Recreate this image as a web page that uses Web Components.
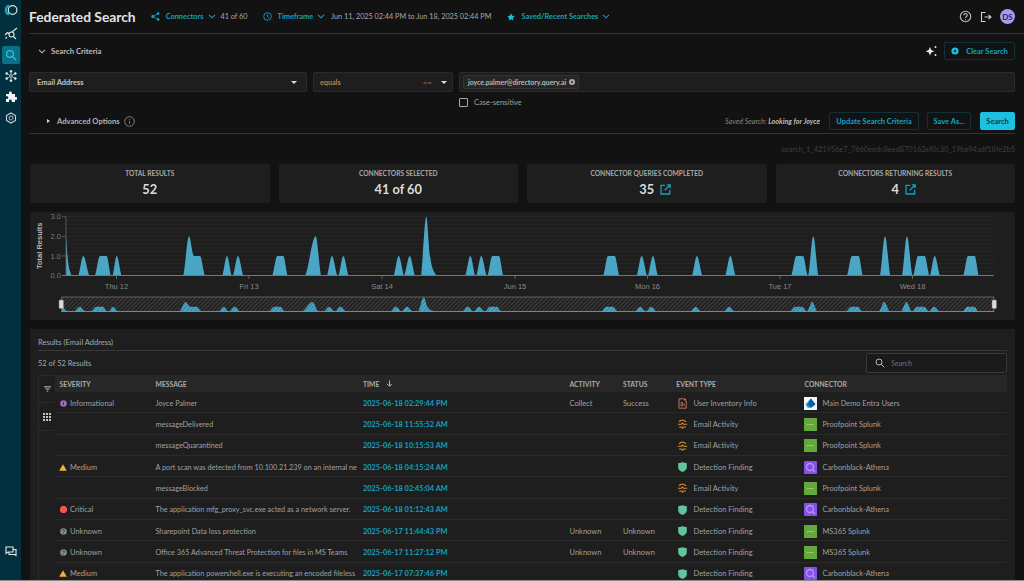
<!DOCTYPE html>
<html>
<head>
<meta charset="utf-8">
<title>Federated Search</title>
<style>
  html, body { margin: 0; height: 581px; overflow: hidden; background: #121212; }
  body { display: flex; font-family: Lato, "Open Sans", sans-serif; color: #c4c4c4; }
  body::after { content: ""; position: fixed; left: 0; right: 0; bottom: 0; height: 1px; background: #8a8a8a; }
  fs-main { flex: 1; min-width: 0; }
</style>
</head>
<body>
<fs-sidebar></fs-sidebar>
<fs-main>
  <fs-header></fs-header>
  <fs-criteria></fs-criteria>
  <fs-stats>
    <fs-stat label="TOTAL RESULTS" value="52"></fs-stat>
    <fs-stat label="CONNECTORS SELECTED" value="41 of 60"></fs-stat>
    <fs-stat label="CONNECTOR QUERIES COMPLETED" value="35" link></fs-stat>
    <fs-stat label="CONNECTORS RETURNING RESULTS" value="4" link></fs-stat>
  </fs-stats>
  <fs-chart></fs-chart>
  <fs-results></fs-results>
</fs-main>

<script>
const TEAL = '#12a0be';

class FsSidebar extends HTMLElement {
  constructor() {
    super();
    this.attachShadow({mode: 'open'}).innerHTML = `
      <style>
        :host { display: flex; flex-direction: column; align-items: center; width: 21px; height: 581px; background: #03303e; flex: none; }
        svg { display: block; }
        .i { width: 18px; height: 18px; margin-top: 3.3px; display: flex; align-items: center; justify-content: center; border-radius: 2px; }
        .logo { margin-top: 1px; height: 18px; }
        .active { background: #0b6f86; }
        .spacer { flex: 1; }
        .bottom { margin-bottom: 21px; }
      </style>
      <div class="i logo"><svg width="14" height="12" viewBox="0 0 14 12" fill="none"><path d="M5 1.500A4.800 4.800 0 0 0 5 10.500" stroke="#1aa6c4" stroke-width="2.200"/><circle cx="8.600" cy="6" r="4.300" stroke="#d8e4e8" stroke-width="1.200"/></svg></div>
      <div class="i" style="margin-top:5px"><svg width="14" height="13" viewBox="0 0 14 13" fill="none" stroke="#dfe6e9" stroke-width="1.100"><path d="M1 8l2.500-2.500 2 1.500M8 5l5-4"/><circle cx="7.500" cy="7.500" r="2.500"/><path d="M9.500 9.500l2.500 2.500M1.500 11.500L3 10"/></svg></div>
      <div class="i active" style="margin-top:4px"><svg width="12" height="12" viewBox="0 0 12 12" fill="none" stroke="#2bc4e0" stroke-width="1.200"><circle cx="5" cy="5" r="3.400"/><path d="M7.600 7.600L11 11"/></svg></div>
      <div class="i"><svg width="12" height="12" viewBox="0 0 12 12" fill="#dfe6e9" stroke="#dfe6e9" stroke-width=".7"><path d="M6 1v10M1.700 3.500l8.600 5M10.300 3.500l-8.600 5" fill="none"/><circle cx="6" cy="1.300" r="1"/><circle cx="6" cy="10.700" r="1"/><circle cx="1.700" cy="3.500" r="1"/><circle cx="10.300" cy="3.500" r="1"/><circle cx="1.700" cy="8.500" r="1"/><circle cx="10.300" cy="8.500" r="1"/><circle cx="6" cy="6" r="1.200" fill="#03303e"/></svg></div>
      <div class="i" style="margin-top:3px"><svg width="12" height="12" viewBox="0 0 12 12" fill="#f1f4f5"><path d="M1 3h3V2a1.400 1.400 0 0 1 2.800 0v1H10v3h1a1.400 1.400 0 0 1 0 2.800h-1V11H6.800V10A1.400 1.400 0 0 0 4 10v1H1V8h1a1.400 1.400 0 0 0 0-2.800H1z"/></svg></div>
      <div class="i" style="margin-top:3px"><svg width="12" height="12" viewBox="0 0 12 12" fill="none" stroke="#c8d2d6" stroke-width="1.100"><path d="M6 1l4.500 2.500v5L6 11 1.500 8.500v-5z"/><circle cx="6" cy="6" r="1.900" stroke-dasharray="1.200 .5"/></svg></div>
      <div class="spacer"></div>
      <div class="i bottom"><svg width="12" height="11" viewBox="0 0 12 11" fill="none" stroke="#e4eaec" stroke-width="1.100"><path d="M1 1h7v5H3L1 7.500zM8 3.500h3V9.500L9.500 8.500H4V6"/></svg></div>`;
  }
}
customElements.define('fs-sidebar', FsSidebar);

const chev = c => `<svg width="8" height="5" viewBox="0 0 8 5" fill="none" stroke="${c}" stroke-width="1.100"><path d="M1 .8l3 3 3-3"/></svg>`;

class FsHeader extends HTMLElement {
  constructor() {
    super();
    this.attachShadow({mode: 'open'}).innerHTML = `
      <style>
        :host { display: flex; align-items: center; height: 33px; margin-left: 8px; padding-right: 9px; border-bottom: 1px solid #333; font-size: 7.250px; color: #a8a8a8; }
        h1 { margin: 0 15px 0 0; font-size: 13.800px; font-weight: 700; color: #e4e4e4; white-space: nowrap; }
        .t { color: ${TEAL}; font-size: 7.400px; font-weight: 700; margin: 0 4px 0 6px; white-space: nowrap; }
        .g { display: flex; align-items: center; white-space: nowrap; }
        svg { display: block; flex: none; }
        .r { margin-left: auto; display: flex; align-items: center; gap: 8px; }
        .av { width: 15px; height: 15px; border-radius: 50%; background: #a79bf0; color: #2a2650; font-size: 8px; font-weight: 700; display: flex; align-items: center; justify-content: center; }
      </style>
      <h1>Federated Search</h1>
      <div class="g"><svg width="9" height="9" viewBox="0 0 9 9" fill="${TEAL}" stroke="${TEAL}" stroke-width=".9"><path d="M2 4.500L7 1.500M2 4.500l5 3" fill="none"/><circle cx="1.800" cy="4.500" r="1.200"/><circle cx="7.200" cy="1.500" r="1"/><circle cx="7.200" cy="7.500" r="1"/></svg><span class="t">Connectors</span>${chev(TEAL)}<span style="margin-left:5px">41 of 60</span></div>
      <div class="g" style="margin-left:15px"><svg width="9" height="9" viewBox="0 0 9 9" fill="none" stroke="${TEAL}" stroke-width=".9"><circle cx="4.500" cy="4.500" r="3.800"/><path d="M4.500 2.300v2.400l1.500.9"/></svg><span class="t">Timeframe</span>${chev(TEAL)}<span style="margin-left:6px">Jun 11, 2025 02:44 PM to Jun 18, 2025 02:44 PM</span></div>
      <div class="g" style="margin-left:16px"><svg width="8" height="8" viewBox="0 0 8 8" fill="#1cc0e0"><path d="M4 .3l1.100 2.500 2.700.3-2 1.800.6 2.700L4 6.200 1.600 7.600l.6-2.700-2-1.800 2.700-.3z"/></svg><span class="t">Saved/Recent Searches</span>${chev(TEAL)}</div>
      <div class="r">
        <svg width="13" height="13" viewBox="0 0 13 13" fill="none" stroke="#bdbdbd" stroke-width="1.100"><circle cx="6.500" cy="6.500" r="5.200"/><path d="M4.800 5.200a1.700 1.700 0 1 1 2.600 1.400c-.6.400-.9.700-.9 1.300"/><path d="M6.500 9.200v.9"/></svg>
        <svg width="12" height="12" viewBox="0 0 12 12" fill="none" stroke="#cfcfcf" stroke-width="1.100"><path d="M5.500 1.500H1.500v9h4M4.500 6H11M8.500 3.800L11 6 8.500 8.200"/></svg>
        <div class="av">DS</div>
      </div>`;
  }
}
customElements.define('fs-header', FsHeader);

class FsSelect extends HTMLElement {
  constructor() {
    super();
    this.attachShadow({mode: 'open'}).innerHTML = `
      <style>
        :host { display: flex; align-items: center; height: 20px; box-sizing: border-box; background: #1e1e1e; border: 1px solid #2b2b2b; border-radius: 2px; font-size: 7.500px; padding: 0 8px 0 7px; gap: 4px; }
        .s { flex: 1; min-width: 0; display: flex; align-items: center; justify-content: space-between; }
        i { width: 0; height: 0; border: 3px solid transparent; border-top: 3.500px solid #ddd; border-bottom: 0; }
      </style>
      <div class="s"><slot></slot></div><i></i>`;
  }
}
customElements.define('fs-select', FsSelect);

class FsButton extends HTMLElement {
  constructor() {
    super();
    this.attachShadow({mode: 'open'}).innerHTML = `
      <style>
        :host { display: inline-flex; align-items: center; justify-content: center; gap: 7px; height: 17.500px; box-sizing: border-box; padding: 0 6px; border: 1px solid #10313a; border-radius: 2px; font-size: 7.500px; font-weight: 700; color: #12a5c4; white-space: nowrap; }
        :host([primary]) { background: #1cc0e0; border-color: #1cc0e0; color: #0d3a46; }
      </style>
      <slot></slot>`;
  }
}
customElements.define('fs-button', FsButton);

class FsCriteria extends HTMLElement {
  constructor() {
    super();
    this.attachShadow({mode: 'open'}).innerHTML = `
      <style>
        :host { display: block; margin-left: 8px; padding-right: 9px; font-size: 7.500px; }
        .top { display: flex; align-items: center; height: 34px; padding: 0 0 0 9px; }
        .top b { font-weight: 700; color: #bdbdbd; margin-left: 5px; font-size: 7.700px; }
        .tools { margin-left: auto; display: flex; align-items: center; gap: 6px; }
        .fields { display: grid; grid-template-columns: 278px 140px 1fr; gap: 6px; margin-top: 4px; }
        .email { font-weight: 700; color: #c4c4c4; }
        .eq { color: #c07e50; font-weight: 700; font-size: 7.200px; margin-left: -1px; }
        .eqs { color: #9a6440; font-weight: 700; margin-right: 5px; font-size: 8px; }
        .value { display: flex; align-items: center; height: 20px; box-sizing: border-box; background: #1e1e1e; border: 1px solid #2b2b2b; border-radius: 2px; padding-left: 3px; }
        .chip { display: flex; align-items: center; gap: 3px; height: 12px; padding: 0 3px 0 4px; border: 1px solid #333; border-radius: 2px; background: #262626; font-size: 6.900px; font-weight: 700; color: #b8b8b8; }
        .case { display: flex; align-items: center; gap: 6px; margin: 5px 0 0 430px; height: 10px; color: #a0a0a0; font-size: 7.500px; }
        .case i { width: 7px; height: 7px; border: 1px solid #aaa; border-radius: 1px; }
        .adv { display: flex; align-items: center; height: 24px; padding: 2px 0 0 18px; border-bottom: 1px solid #333; }
        .adv b { font-weight: 700; color: #b4b4b4; margin-left: 7px; font-size: 7.600px; }
        .adv .saved { margin-left: auto; font-style: italic; color: #868686; font-size: 7.200px; margin-right: 9px; white-space: nowrap; }
        .saved em { font-weight: 700; color: #bdbdbd; }
        .tri { width: 0; height: 0; border: 2.500px solid transparent; border-left: 3px solid #ddd; border-right: 0; }
        .id { height: 30px; display: flex; align-items: center; justify-content: flex-end; font-size: 7.400px; color: #3e3e3e; }
        svg { display: block; }
      </style>
      <div class="top">
        ${chev('#bdbdbd')}<b>Search Criteria</b>
        <div class="tools">
          <svg width="13" height="12" viewBox="0 0 13 12" fill="#e8e8e8"><path d="M5 2l1.300 3 3 1.200-3 1.200L5 10.500 3.700 7.400.7 6.200l3-1.200z"/><circle cx="10.500" cy="2" r="1"/><circle cx="10.500" cy="10" r="1"/></svg>
          <fs-button style="width:71px"><svg width="8" height="8" viewBox="0 0 8 8"><circle cx="4" cy="4" r="3.600" fill="#1cc0e0"/><circle cx="4" cy="4" r="1.300" fill="#12323c"/></svg>Clear Search</fs-button>
        </div>
      </div>
      <div class="fields">
        <fs-select style="padding-right:9px"><span class="email">Email Address</span></fs-select>
        <fs-select style="padding-right:5px"><span class="eq">equals</span><span class="eqs">==</span></fs-select>
        <div class="value"><span class="chip">joyce.palmer@directory.query.ai <svg width="6" height="6" viewBox="0 0 6 6"><circle cx="3" cy="3" r="3" fill="#aaa"/><path d="M2 2l2 2M4 2L2 4" stroke="#222" stroke-width=".7"/></svg></span></div>
      </div>
      <div class="case"><i></i>Case-sensitive</div>
      <div class="adv">
        <span class="tri"></span><b>Advanced Options</b>
        <svg style="margin-left:4px" width="11" height="11" viewBox="0 0 11 11" fill="none" stroke="#9a9a9a" stroke-width=".8"><circle cx="5.500" cy="5.500" r="4.800"/><path d="M5.500 4.800v3M5.500 3v.8"/></svg>
        <span class="saved">Saved Search: <em>Looking for Joyce</em></span>
        <fs-button style="width:90px;margin-right:8px">Update Search Criteria</fs-button>
        <fs-button style="width:44px;margin-right:9px">Save As...</fs-button>
        <fs-button primary style="width:35px">Search</fs-button>
      </div>
      <div class="id">search_1_421956e7_7660eedc8eed870162ef0c30_19be94adf18fe2b5</div>`;
  }
}
customElements.define('fs-criteria', FsCriteria);

class FsStats extends HTMLElement {
  constructor() {
    super();
    this.attachShadow({mode: 'open'}).innerHTML = `
      <style>:host { display: grid; grid-template-columns: repeat(4, 1fr); gap: 9px; margin: 0 9px 0 9px; }</style>
      <slot></slot>`;
  }
}
customElements.define('fs-stats', FsStats);

class FsStat extends HTMLElement {
  constructor() {
    super();
    const linked = this.hasAttribute('link');
    const link = linked ? `<svg width="11" height="11" viewBox="0 0 11 11" fill="none" stroke="${TEAL}" stroke-width="1.300"><path d="M5 1.300H1v8.700h8.700V6M4.700 6.300L10 1M6.800 .8H10.200V4.200"/></svg>` : '';
    this.attachShadow({mode: 'open'}).innerHTML = `
      <style>
        :host { display: flex; flex-direction: column; align-items: center; height: 39px; background: #1e1e1e; border-radius: 2px; box-sizing: border-box; padding-top: 4px; }
        .l { font-size: 6.650px; font-weight: 700; color: #a8a8a8; line-height: 10px; white-space: nowrap; }
        .v { display: flex; align-items: center; gap: 6px; margin-top: 2px; font-size: 12.800px; font-weight: 700; color: #dcdcdc; line-height: 18px; }
        .v.linked { padding-left: 17px; }
      </style>
      <div class="l">${this.getAttribute('label')}</div>
      <div class="v${linked ? ' linked' : ''}">${this.getAttribute('value')}${link}</div>`;
  }
}
customElements.define('fs-stat', FsStat);

// chart series: [x, value] points in page-x, one sub-array per peak
const PEAKS = [
  [[66,2],[67.500,1],[69,.4],[71.700,0]],
  [[78.300,0],[83.300,1],[89.300,0]],
  [[95,0],[100,1],[106.700,1],[110.700,0]],
  [[112.700,0],[116.700,1],[121.700,0]],
  [[183.300,0],[189,2],[194,1],[200,1],[205,0]],
  [[222.300,0],[227,1],[231.700,0]],
  [[233,0],[238,1],[243.300,0]],
  [[272.300,0],[277.300,1],[283.300,1],[287.700,0]],
  [[305.300,0],[315.700,2],[321,0]],
  [[327,0],[332,1],[337.300,0]],
  [[338.700,0],[343.300,1],[348.700,0]],
  [[393.700,0],[398.700,1],[404,0]],
  [[404.300,0],[409.700,1],[415,0]],
  [[421,0],[426.300,3],[430,1],[433,.3],[436.700,0]],
  [[465.300,0],[470.300,1],[475.300,0]],
  [[476.300,0],[481.300,1],[486.700,0]],
  [[487.700,0],[492.300,1],[499,1],[503.300,0]],
  [[603.300,0],[608,1],[614.700,1],[619.300,0]],
  [[636.700,0],[641.700,1],[647,0]],
  [[648,0],[653,1],[658,0]],
  [[692,0],[697,1],[702.300,0]],
  [[725.300,0],[730.300,1],[735.700,0]],
  [[791.300,0],[796.300,1],[803,1],[807.700,0]],
  [[808.300,0],[813.300,2],[818.300,0]],
  [[847,0],[852,1],[858.700,1],[862.700,0]],
  [[880,0],[885,2],[890.300,0]],
  [[902,0],[907,2],[912.300,0]],
  [[913.300,0],[918,1],[924.700,1],[929.300,0]],
  [[930,0],[934.700,1],[940,0]],
  [[963.300,0],[968,1],[974.700,1],[978.700,0]]
];

// monotone curve through a peak, closed on the baseline
function peakPath(pts, fx, fy, base) {
  const p = pts.map(([x, v]) => [fx(x), fy(v)]);
  const s = [];
  for (let i = 0; i < p.length - 1; i++) s.push((p[i + 1][1] - p[i][1]) / (p[i + 1][0] - p[i][0]));
  const m = p.map((_, i) => {
    if (i === 0 || i === p.length - 1) return i === 0 ? s[0] * .6 : s[s.length - 1] * .6;
    return s[i - 1] * s[i] <= 0 ? 0 : 2 * s[i - 1] * s[i] / (s[i - 1] + s[i]);
  });
  let d = `M${p[0][0].toFixed(1)} ${base}L${p[0][0].toFixed(1)} ${p[0][1].toFixed(1)}`;
  for (let i = 0; i < p.length - 1; i++) {
    const dx = (p[i + 1][0] - p[i][0]) / 3;
    d += `C${(p[i][0] + dx).toFixed(1)} ${(p[i][1] + m[i] * dx).toFixed(1)} ${(p[i + 1][0] - dx).toFixed(1)} ${(p[i + 1][1] - m[i + 1] * dx).toFixed(1)} ${p[i + 1][0].toFixed(1)} ${p[i + 1][1].toFixed(1)}`;
  }
  return d + `L${p[p.length - 1][0].toFixed(1)} ${base}Z`;
}

class FsChart extends HTMLElement {
  constructor() {
    super();
    // svg origin is page (30,212)
    const X = x => (x - 30);
    const main = PEAKS.map(p => `<path d="${peakPath(p, X, v => 63.5 - v * 19.6, 63.5)}"/>`).join('');
    const nav = PEAKS.map(p => `<path d="${peakPath(p, x => x * 1.004 - 34.3, v => 99.5 - v * 4.8, 99.5)}"/>`).join('');
    let grid = '';
    for (let i = 0; i < 15; i++) {
      grid += `<path d="M36 ${(4.5 + i * 3.92).toFixed(1)}H964" stroke="#2a2a2a" stroke-width=".7"/>`;
    }
    const yLabels = ['3.0', '2.0', '1.0', '0.0'].map((t, i) => {
      const y = 4.7 + i * 19.6;
      return `<text x="31" y="${y + 2.7}" text-anchor="end" font-size="7.5" fill="#7a7a7a">${t}</text><path d="M32 ${y}H36" stroke="#666" stroke-width=".8"/>`;
    }).join('');
    const days = [['Thu 12', 116.5], ['Fri 13', 249], ['Sat 14', 382], ['Jun 15', 515], ['Mon 16', 647.5], ['Tue 17', 780], ['Wed 18', 912.5]];
    const xLabels = days.map(([t, x]) => `<path d="M${X(x)} 63.5v3.500" stroke="#777" stroke-width=".8"/><text x="${X(x)}" y="77" text-anchor="middle" font-size="7.5" fill="#8a8a8a">${t}</text>`).join('');
    this.attachShadow({mode: 'open'}).innerHTML = `
      <style>
        :host { display: block; height: 108px; margin: 9px 9px 0 9px; background: #1e1e1e; border-radius: 2px; }
        svg { display: block; font-family: "Liberation Sans", Arial, sans-serif; }
      </style>
      <svg width="985" height="108" viewBox="0 0 985 108">
        <defs>
          <pattern id="h" width="3" height="3" patternUnits="userSpaceOnUse" patternTransform="rotate(-45)"><rect width="3" height="3" fill="#1e1e1e"/><rect width="3" height="1.2" fill="#3e3e3e"/></pattern>
          <pattern id="b" width="3" height="3" patternUnits="userSpaceOnUse" patternTransform="rotate(-45)"><rect width="3" height="3" fill="#4ba6c6"/><rect width="3" height="1" fill="#2f7f9c"/></pattern>
        </defs>
        ${grid}
        <g fill="#4ba6c6">${main}</g>
        ${yLabels}
        <path d="M36 4.700V63.500" stroke="#666" stroke-width=".8"/>
        <path d="M32 63.500H964" stroke="#777" stroke-width="1"/>
        ${xLabels}
        <text transform="translate(12 57) rotate(-90)" font-size="7.5" font-weight="700" fill="#b8b8b8">Total Results</text>
        <rect x="31.5" y="85" width="932.5" height="14.5" fill="url(#h)"/>
        <g fill="url(#b)">${nav}</g>
        <path d="M31.500 99.500V85H964V99.500" fill="none" stroke="#6e6e6e" stroke-width=".8"/>
        <path d="M31.500 99.500H964" stroke="#9a9a9a" stroke-width=".8"/>
        <rect x="29" y="88" width="4.5" height="8.5" rx="1" fill="#dcdcdc" stroke="#777" stroke-width=".5"/>
        <rect x="962" y="88" width="4.5" height="8.5" rx="1" fill="#dcdcdc" stroke="#777" stroke-width=".5"/>
      </svg>`;
  }
}
customElements.define('fs-chart', FsChart);

// row icons
const SEV = {
  Informational: `<svg width="7" height="7" viewBox="0 0 7 7"><circle cx="3.500" cy="3.500" r="3.300" fill="#9a6cc0"/><path d="M3.500 2v3" stroke="#3c2850" stroke-width=".9"/></svg>`,
  Medium: `<svg width="8" height="7" viewBox="0 0 8 7"><path d="M4 .3L7.800 6.800H.2z" fill="#f0b23c"/></svg>`,
  Critical: `<svg width="7" height="7" viewBox="0 0 7 7"><path d="M2 0h3l2 2v3L5 7H2L0 5V2z" fill="#ee5a48"/></svg>`,
  Unknown: `<svg width="7" height="7" viewBox="0 0 7 7"><circle cx="3.500" cy="3.500" r="3.300" fill="#8a8a8a"/><path d="M2.500 2.800a1 1 0 1 1 1.400.9c-.3.200-.4.300-.4.700M3.500 5v.7" stroke="#2a2a2a" stroke-width=".7" fill="none"/></svg>`
};
const EVT = {
  'User Inventory Info': `<svg width="9" height="11" viewBox="0 0 9 11" fill="none"><path d="M1 .8h4.800L8.200 3v7.200H1z" stroke="#c0705a" stroke-width="1"/><path d="M3 4.500h1.500V8H3zM5 6h1.200v2" stroke="#c0705a" stroke-width=".8"/><circle cx="7" cy="1.500" r="1" fill="#ee7a3c"/></svg>`,
  'Email Activity': `<svg width="11" height="10" viewBox="0 0 11 10" fill="none" stroke="#d98a30" stroke-width="1.100"><path d="M2 2.800L4 1.200h2.500L9 2.800M.8 5.200h3.700l1-1.200 1 1.200h3.700M2 8h2.500l1 1.300 1-1.300H9"/></svg>`,
  'Detection Finding': `<svg width="9" height="10" viewBox="0 0 9 10"><path d="M4.500 .2L8.800 1.300V5.500C8.800 7.800 6.800 9.300 4.500 10 2.200 9.300 .2 7.800 .2 5.500V1.300z" fill="#62c49a"/></svg>`
};
const CONN = {
  entra: `<svg width="13" height="13" viewBox="0 0 13 13"><rect width="13" height="13" fill="#f4f6f8"/><path d="M6.800 1.500L11.500 7.300 7 10.800H3.800L1.500 7.500z" fill="#1f9ad6"/><path d="M6.800 1.500L4 7.300l3 3.500 4.500-3.500z" fill="#0c5f9c"/></svg>`,
  splunk: `<svg width="13" height="13" viewBox="0 0 13 13"><rect width="13" height="13" fill="#63a83c"/><path d="M3 6.500h7" stroke="#cfe6bc" stroke-width=".7" stroke-dasharray="1 .4"/></svg>`,
  athena: `<svg width="13" height="13" viewBox="0 0 13 13" fill="none"><rect width="13" height="13" rx="1" fill="#8450e6"/><circle cx="6" cy="6" r="3.500" stroke="#b898f2" stroke-width="1.300"/><path d="M8.500 8.500L11 11" stroke="#b898f2" stroke-width="1.300"/></svg>`
};

const ROWS = [
  ['Informational', 'Joyce Palmer', '2025-06-18 02:29:44 PM', 'Collect', 'Success', 'User Inventory Info', 'entra', 'Main Demo Entra Users'],
  ['', 'messageDelivered', '2025-06-18 11:55:52 AM', '', '', 'Email Activity', 'splunk', 'Proofpoint Splunk'],
  ['', 'messageQuarantined', '2025-06-18 10:15:53 AM', '', '', 'Email Activity', 'splunk', 'Proofpoint Splunk'],
  ['Medium', 'A port scan was detected from 10.100.21.239 on an internal ne', '2025-06-18 04:15:24 AM', '', '', 'Detection Finding', 'athena', 'Carbonblack-Athena'],
  ['', 'messageBlocked', '2025-06-18 02:45:04 AM', '', '', 'Email Activity', 'splunk', 'Proofpoint Splunk'],
  ['Critical', 'The application mfg_proxy_svc.exe acted as a network server.', '2025-06-18 01:12:43 AM', '', '', 'Detection Finding', 'athena', 'Carbonblack-Athena'],
  ['Unknown', 'Sharepoint Data loss protection', '2025-06-17 11:44:43 PM', 'Unknown', 'Unknown', 'Detection Finding', 'splunk', 'MS365 Splunk'],
  ['Unknown', 'Office 365 Advanced Threat Protection for files in MS Teams', '2025-06-17 11:27:12 PM', 'Unknown', 'Unknown', 'Detection Finding', 'splunk', 'MS365 Splunk'],
  ['Medium', 'The application powershell.exe is executing an encoded fileless', '2025-06-17 07:37:46 PM', '', '', 'Detection Finding', 'athena', 'Carbonblack-Athena']
];

class FsRow extends HTMLElement {
  constructor() {
    super();
    this.attachShadow({mode: 'open'});
  }
  set data(r) {
    const [sev, msg, time, act, st, evt, con, name] = r;
    this.shadowRoot.innerHTML = `
      <style>
        :host { display: grid; grid-template-columns: var(--cols); height: 21.330px; box-sizing: border-box; border-bottom: 1px solid #2a2a2a; padding-top: 2px; align-items: center; font-size: 7.500px; color: #a0a0a0; }
        div { display: flex; align-items: center; min-width: 0; white-space: nowrap; overflow: hidden; padding-left: 4.500px; height: 100%; }
        svg { flex: none; display: block; }
        .sev .ic { width: 7.500px; margin-right: 3px; display: flex; justify-content: center; }
        .msg { font-size: 7.250px; }
        .time { color: ${TEAL}; font-weight: 700; font-size: 7.400px; }
        .evt .ic { width: 12px; margin-right: 5.200px; display: flex; justify-content: center; }
        .con { font-size: 7.400px; }
        .con svg { margin-right: 5px; }
      </style>
      <div class="sev">${sev ? '<span class="ic">' + SEV[sev] + '</span><span>' + sev + '</span>' : ''}</div>
      <div class="msg"><span>${msg}</span></div>
      <div class="time">${time}</div>
      <div>${act}</div>
      <div>${st}</div>
      <div class="evt"><span class="ic">${EVT[evt]}</span><span>${evt}</span></div>
      <div class="con">${CONN[con]}<span>${name}</span></div>`;
  }
}
customElements.define('fs-row', FsRow);

class FsResults extends HTMLElement {
  constructor() {
    super();
    this.attachShadow({mode: 'open'}).innerHTML = `
      <style>
        :host { display: block; height: 260px; margin: 9px 9px 0 9px; background: #1e1e1e; padding: 0 8px; box-sizing: border-box; font-size: 7.500px; color: #a8a8a8; --cols: 96px 207.500px 206.500px 53.500px 53.300px 128.200px 1fr; }
        .title { height: 22px; display: flex; align-items: flex-end; padding-bottom: 3px; box-sizing: border-box; border-bottom: 1px solid #383838; }
        .bar { display: flex; align-items: center; justify-content: space-between; height: 24px; }
        .search { display: flex; align-items: center; gap: 6px; width: 141px; height: 20px; box-sizing: border-box; border: 1px solid #3a3a3a; border-radius: 2px; padding-left: 8px; background: #1a1a1a; color: #6e6e6e; font-size: 7.500px; font-style: italic; }
        .table { display: flex; }
        .tools { width: 17px; box-sizing: border-box; flex: none; border-left: 1px solid #2a2a2a; display: flex; flex-direction: column; }
        .tools div { height: 28px; display: flex; align-items: center; justify-content: center; border-bottom: 1px solid #2a2a2a; box-sizing: border-box; }
        .tools div:first-child { border-top: 1px solid #2a2a2a; }
        .body { flex: 1; min-width: 0; }
        .head { display: grid; grid-template-columns: var(--cols); height: 17px; align-items: center; background: #272727; font-size: 6.800px; font-weight: 700; color: #ababab; }
        .head span { padding-left: 4.500px; display: flex; align-items: center; gap: 7px; }
        svg { display: block; }
      </style>
      <div class="title">Results (Email Address)</div>
      <div class="bar"><span>52 of 52 Results</span>
        <div class="search"><svg width="10" height="10" viewBox="0 0 10 10" fill="none" stroke="#b8b8b8" stroke-width="1"><circle cx="4" cy="4" r="3"/><path d="M6.200 6.200L9.300 9.300"/></svg>Search</div>
      </div>
      <div class="table">
        <div class="tools">
          <div><svg width="7" height="6" viewBox="0 0 7 6" stroke="#c4c4c4" stroke-width="1"><path d="M0 .8h7M1.500 3h4M2.800 5.200h1.400"/></svg></div>
          <div><svg width="8" height="8" viewBox="0 0 8 8" fill="#c4c4c4"><path d="M0 0h2v2H0zM3 0h2v2H3zM6 0h2v2H6zM0 3h2v2H0zM3 3h2v2H3zM6 3h2v2H6zM0 6h2v2H0zM3 6h2v2H3zM6 6h2v2H6z"/></svg></div>
        </div>
        <div class="body">
          <div class="head">
            <span>SEVERITY</span><span>MESSAGE</span>
            <span>TIME <svg width="7" height="7" viewBox="0 0 7 7" fill="none" stroke="#c4c4c4" stroke-width=".9"><path d="M3.500 .5v5.500M1 3.800l2.500 2.500L6 3.800"/></svg></span>
            <span>ACTIVITY</span><span>STATUS</span><span>EVENT TYPE</span><span>CONNECTOR</span>
          </div>
          <div id="rows"></div>
        </div>
      </div>`;
    const holder = this.shadowRoot.getElementById('rows');
    ROWS.forEach(r => {
      const row = document.createElement('fs-row');
      row.data = r;
      holder.appendChild(row);
    });
  }
}
customElements.define('fs-results', FsResults);
</script>
</body>
</html>
